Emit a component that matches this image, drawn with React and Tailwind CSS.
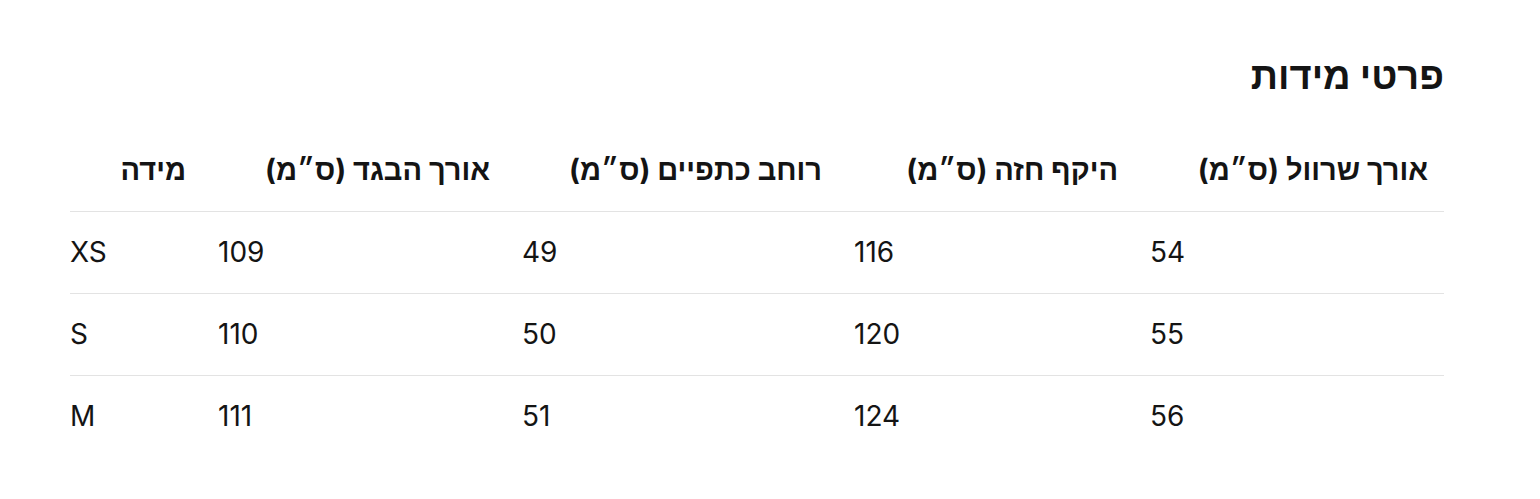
const columns = [
  { label: "אורך שרוול (ס״מ)", key: "sleeve", width: "w-[310px]" },
  { label: "היקף חזה (ס״מ)", key: "chest", width: "w-[296px]" },
  { label: "רוחב כתפיים (ס״מ)", key: "shoulders", width: "w-[332px]" },
  { label: "אורך הבגד (ס״מ)", key: "length", width: "w-[304px]" },
  { label: "מידה", key: "size", width: "w-[132px]" },
];

const rows = [
  { size: "XS", length: "109", shoulders: "49", chest: "116", sleeve: "54" },
  { size: "S", length: "110", shoulders: "50", chest: "120", sleeve: "55" },
  { size: "M", length: "111", shoulders: "51", chest: "124", sleeve: "56" },
];

export default function App() {
  return (
    <main
      dir="rtl"
      className="bg-white min-h-screen pt-[55px] pl-[70px] pr-[96px] text-[#141414]"
      style={{ fontFamily: 'Inter, "Liberation Sans", Arial, sans-serif' }}
    >
      <h2 className="text-[38px] leading-[40px] font-bold">פרטי מידות</h2>

      <table className="mt-[34px] w-full border-collapse table-fixed">
        <thead>
          <tr className="h-[82px] border-b border-[#e3e3e3]">
            {columns.map((col, i) => (
              <th
                key={col.key}
                className={`${col.width} text-right align-middle text-[29px] font-bold pr-4 ${
                  i === columns.length - 1 ? "pl-0" : "pl-4"
                }`}
              >
                {col.label}
              </th>
            ))}
          </tr>
        </thead>
        <tbody>
          {rows.map((row, r) => (
            <tr
              key={row.size}
              className={`h-[82px] ${
                r < rows.length - 1 ? "border-b border-[#e3e3e3]" : ""
              }`}
            >
              {columns.map((col, i) => (
                <td
                  key={col.key}
                  dir="ltr"
                  className={`text-left align-middle text-[28px] pr-4 ${
                    i === columns.length - 1 ? "pl-0" : "pl-4"
                  }`}
                >
                  {row[col.key]}
                </td>
              ))}
            </tr>
          ))}
        </tbody>
      </table>
    </main>
  );
}
